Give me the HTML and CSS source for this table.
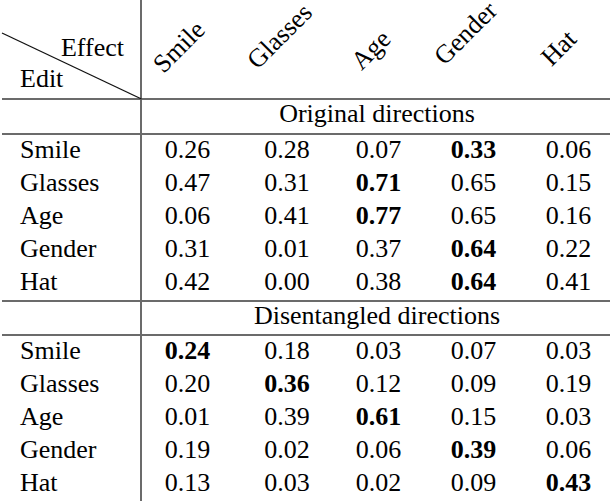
FILE: index.html
```html
<!DOCTYPE html>
<html>
<head>
<meta charset="utf-8">
<link rel="stylesheet" href="styles.css">
</head>
<body>
<div class="tbl">
  <div class="ln hd">
    <div class="corner">
      <svg class="diag" width="142" height="100" viewBox="0 0 142 100"><line x1="0" y1="33" x2="139.5" y2="99" stroke="#111" stroke-width="1.3"/></svg>
      <div class="f effect">Effect</div>
      <div class="f edit">Edit</div>
    </div>
    <div class="hcell k1"><span class="f rot">Smile</span></div>
    <div class="hcell k2"><span class="f rot">Glasses</span></div>
    <div class="hcell k3"><span class="f rot">Age</span></div>
    <div class="hcell k4"><span class="f rot">Gender</span></div>
    <div class="hcell k5"><span class="f rot">Hat</span></div>
  </div>

  <div class="ln sec sa">
    <div class="lab"></div>
    <div class="f ttl">Original directions</div>
  </div>
  <div class="ln dt"><div class="f lab">Smile</div><div class="f">0.26</div><div class="f">0.28</div><div class="f">0.07</div><div class="f bd">0.33</div><div class="f">0.06</div></div>
  <div class="ln dt"><div class="f lab">Glasses</div><div class="f">0.47</div><div class="f">0.31</div><div class="f bd">0.71</div><div class="f">0.65</div><div class="f">0.15</div></div>
  <div class="ln dt"><div class="f lab">Age</div><div class="f">0.06</div><div class="f">0.41</div><div class="f bd">0.77</div><div class="f">0.65</div><div class="f">0.16</div></div>
  <div class="ln dt"><div class="f lab">Gender</div><div class="f">0.31</div><div class="f">0.01</div><div class="f">0.37</div><div class="f bd">0.64</div><div class="f">0.22</div></div>
  <div class="ln dt"><div class="f lab">Hat</div><div class="f">0.42</div><div class="f">0.00</div><div class="f">0.38</div><div class="f bd">0.64</div><div class="f">0.41</div></div>

  <div class="ln sec sb">
    <div class="lab"></div>
    <div class="f ttl">Disentangled directions</div>
  </div>
  <div class="ln dt"><div class="f lab">Smile</div><div class="f bd">0.24</div><div class="f">0.18</div><div class="f">0.03</div><div class="f">0.07</div><div class="f">0.03</div></div>
  <div class="ln dt"><div class="f lab">Glasses</div><div class="f">0.20</div><div class="f bd">0.36</div><div class="f">0.12</div><div class="f">0.09</div><div class="f">0.19</div></div>
  <div class="ln dt"><div class="f lab">Age</div><div class="f">0.01</div><div class="f">0.39</div><div class="f bd">0.61</div><div class="f">0.15</div><div class="f">0.03</div></div>
  <div class="ln dt"><div class="f lab">Gender</div><div class="f">0.19</div><div class="f">0.02</div><div class="f">0.06</div><div class="f bd">0.39</div><div class="f">0.06</div></div>
  <div class="ln dt"><div class="f lab">Hat</div><div class="f">0.13</div><div class="f">0.03</div><div class="f">0.02</div><div class="f">0.09</div><div class="f bd">0.43</div></div>
</div>
</body>
</html>
```
FILE: styles.css
```css
body {
  margin: 0;
  font-size: 26px;
}
.f {
  font-family: "Liberation Serif";
}
.tbl {
  color: #000;
  padding-left: 2px;
  width: 608px;
}
.ln {
  display: flex;
}
.ln > div {
  flex: none;
  box-sizing: border-box;
}
.ln > :nth-child(1) { width: 140px; border-right: 2px solid #6b6b6b; }
.ln > :nth-child(2) { width: 95px; }
.ln > :nth-child(3) { width: 95px; }
.ln > :nth-child(4) { width: 94px; }
.ln > :nth-child(5) { width: 95px; }
.ln > :nth-child(6) { width: 89px; }
.hd {
  height: 100px;
  border-bottom: 2px solid #6b6b6b;
  box-sizing: border-box;
}
.corner {
  position: relative;
  display: flex;
  flex-direction: column;
  padding-top: 32px;
  line-height: 31px;
}
.diag {
  position: absolute;
  left: 0;
  top: 0;
  overflow: visible;
}
.effect {
  align-self: flex-end;
  padding-right: 16px;
}
.edit {
  padding-left: 18px;
}
.hcell {
  display: flex;
  align-items: flex-end;
}
.rot {
  display: inline-block;
  line-height: 26px;
  white-space: nowrap;
  transform: rotate(-45deg);
  transform-origin: 0 21.8px;
}
.k1 { padding-left: 22px; padding-bottom: 19px; }
.k2 { padding-left: 21px; padding-bottom: 23px; }
.k3 { padding-left: 30px; padding-bottom: 22px; }
.k4 { padding-left: 19px; padding-bottom: 27px; }
.k5 { padding-left: 31px; padding-bottom: 26px; }

.sec {
  border-bottom: 2px solid #6b6b6b;
  line-height: 27px;
  box-sizing: border-box;
}
.sa { height: 35px; }
.sb { border-top: 2px solid #6b6b6b; height: 35.5px; }
.sec > .ttl {
  width: 468px;
  text-align: center;
  padding-left: 2px;
}
.dt {
  height: 33px;
  line-height: 27px;
}
.dt > div {
  text-align: center;
  padding-top: 1px;
}
.dt > .lab {
  text-align: left;
  padding-left: 18px;
}
.dt > :nth-child(2) { padding-right: 4px; }
.dt > :nth-child(3) { padding-left: 5px; }
.dt > :nth-child(4) { padding-right: 1px; }
.dt > :nth-child(6) { padding-left: 6px; }
.bd {
  font-weight: bold;
}
```
